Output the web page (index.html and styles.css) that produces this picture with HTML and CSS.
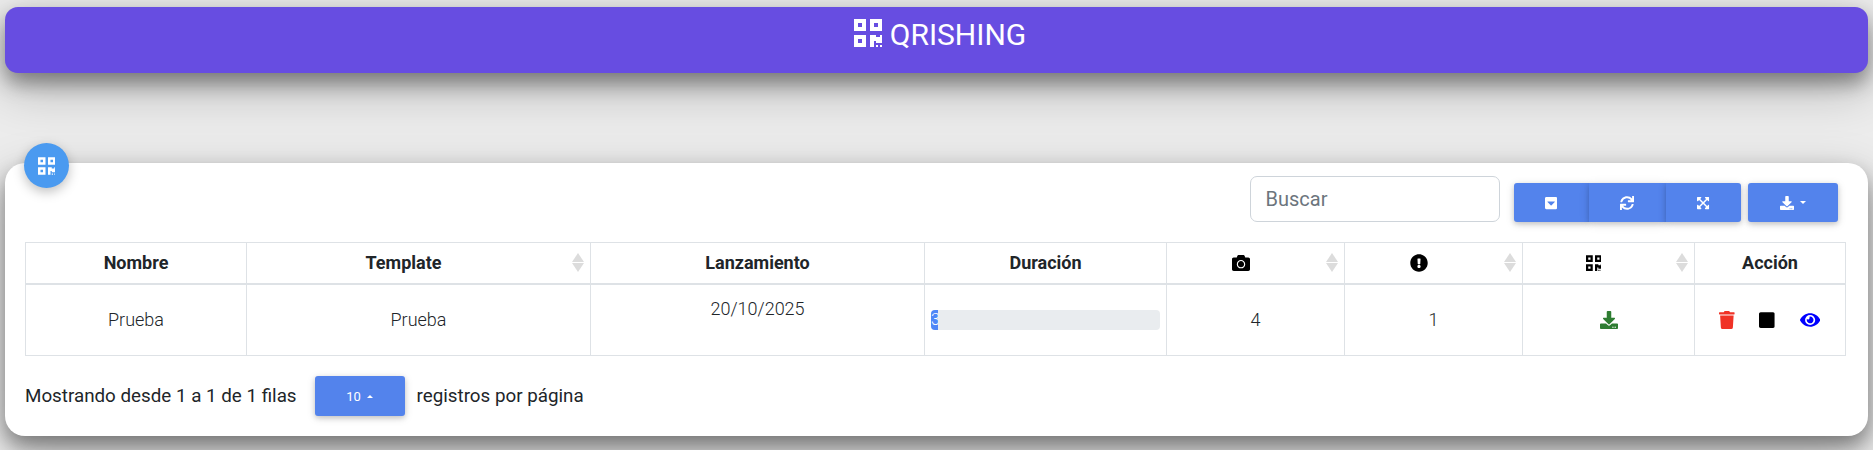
FILE: index.html
```html
<!DOCTYPE html>
<html lang="es">
<head>
<meta charset="utf-8">
<title>QRISHING</title>
<link rel="stylesheet" href="styles.css">
</head>
<body>
<svg class="defs" aria-hidden="true">
  <symbol id="i-qr" viewBox="0 0 448 512"><path d="M0 224h192V32H0v192zM64 96h64v64H64V96zm192-64v192h192V32H256zm128 128h-64V96h64v64zM0 480h192V288H0v192zm64-128h64v64H64v-64zm352-64h32v128h-96v-32h-32v96h-64V288h96v32h64v-32zm0 160h32v32h-32v-32zm-64 0h32v32h-32v-32z"/></symbol>
  <symbol id="i-down" viewBox="0 0 512 512"><path d="M216 0h80c13.3 0 24 10.7 24 24v168h87.7c17.8 0 26.7 21.5 14.1 34.1L269.7 378.3c-7.5 7.5-19.8 7.5-27.3 0L90.1 226.1c-12.6-12.6-3.7-34.1 14.1-34.1H192V24c0-13.3 10.7-24 24-24zm296 376v112c0 13.3-10.7 24-24 24H24c-13.3 0-24-10.7-24-24V376c0-13.3 10.7-24 24-24h146.7l49 49c20.1 20.1 52.5 20.1 72.6 0l49-49H488c13.3 0 24 10.7 24 24zm-124 88c0-11-9-20-20-20s-20 9-20 20 9 20 20 20 20-9 20-20zm64 0c0-11-9-20-20-20s-20 9-20 20 9 20 20 20 20-9 20-20z"/></symbol>
  <symbol id="i-trash" viewBox="0 0 448 512"><path d="M432 32H312l-9.4-18.7A24 24 0 0 0 281.1 0H166.8a23.72 23.72 0 0 0-21.4 13.3L136 32H16A16 16 0 0 0 0 48v32a16 16 0 0 0 16 16h416a16 16 0 0 0 16-16V48a16 16 0 0 0-16-16zM53.2 467a48 48 0 0 0 47.9 45h245.8a48 48 0 0 0 47.9-45L416 128H32z"/></symbol>
  <symbol id="i-stop" viewBox="0 0 448 512"><path d="M400 32H48C21.5 32 0 53.5 0 80v352c0 26.5 21.5 48 48 48h352c26.5 0 48-21.5 48-48V80c0-26.5-21.5-48-48-48z"/></symbol>
  <symbol id="i-eye" viewBox="0 0 576 512"><path d="M572.52 241.4C518.29 135.59 410.93 64 288 64S57.68 135.64 3.48 241.41a32.35 32.35 0 0 0 0 29.19C57.71 376.41 165.07 448 288 448s230.32-71.64 284.52-177.41a32.35 32.35 0 0 0 0-29.19zM288 400a144 144 0 1 1 144-144 143.93 143.93 0 0 1-144 144zm0-240a95.31 95.31 0 0 0-25.31 3.79 47.85 47.85 0 0 1-66.9 66.9A95.78 95.78 0 1 0 288 160z"/></symbol>
  <symbol id="i-camera" viewBox="0 0 512 512"><path d="M512 144v288c0 26.5-21.5 48-48 48H48c-26.5 0-48-21.5-48-48V144c0-26.5 21.5-48 48-48h88l12.3-32.9c7-18.7 24.9-31.1 44.9-31.1h125.5c20 0 37.9 12.4 44.9 31.1L376 96h88c26.5 0 48 21.5 48 48zM376 288c0-66.2-53.8-120-120-120s-120 53.8-120 120 53.8 120 120 120 120-53.8 120-120zm-32 0c0 48.5-39.5 88-88 88s-88-39.5-88-88 39.5-88 88-88 88 39.5 88 88z"/></symbol>
  <symbol id="i-excl" viewBox="0 0 512 512"><path d="M504 256c0 136.997-111.043 248-248 248S8 392.997 8 256C8 119.083 119.043 8 256 8s248 111.083 248 248zm-248 50c-25.405 0-46 20.595-46 46s20.595 46 46 46 46-20.595 46-46-20.595-46-46-46zm-43.673-165.346l7.418 136c.347 6.364 5.609 11.346 11.982 11.346h48.546c6.373 0 11.635-4.982 11.982-11.346l7.418-136c.375-6.874-5.098-12.654-11.982-12.654h-63.383c-6.884 0-12.356 5.78-11.981 12.654z"/></symbol>
  <symbol id="i-sync" viewBox="0 0 512 512"><path d="M440.65 12.57l4 82.77A247.16 247.16 0 0 0 255.83 8C134.73 8 33.91 94.92 12.29 209.82A12 12 0 0 0 24.09 224h49.05a12 12 0 0 0 11.67-9.26 175.91 175.91 0 0 1 317-56.94l-101.46-4.86a12 12 0 0 0-12.57 12v47.41a12 12 0 0 0 12 12H500a12 12 0 0 0 12-12V12a12 12 0 0 0-12-12h-47.37a12 12 0 0 0-11.98 12.57zM255.83 432a175.61 175.61 0 0 1-146-77.8l101.8 4.87a12 12 0 0 0 12.57-12v-47.4a12 12 0 0 0-12-12H12a12 12 0 0 0-12 12V500a12 12 0 0 0 12 12h47.35a12 12 0 0 0 12-12.6l-4.15-82.57A247.17 247.17 0 0 0 255.83 504c121.11 0 221.93-86.92 243.55-201.82a12 12 0 0 0-11.8-14.18h-49.05a12 12 0 0 0-11.67 9.26A175.86 175.86 0 0 1 255.83 432z"/></symbol>
  <symbol id="i-expand" viewBox="0 0 448 512"><path d="M448 344v112a23.94 23.94 0 0 1-24 24H312c-21.39 0-32.09-25.9-17-41l36.2-36.2L224 295.6 116.77 402.9 153 439c15.09 15.1 4.39 41-17 41H24a23.94 23.94 0 0 1-24-24V344c0-21.4 25.89-32.1 41-17l36.19 36.2L184.46 256 77.18 148.7 41 185c-15.1 15.1-41 4.4-41-17V56a23.94 23.94 0 0 1 24-24h112c21.39 0 32.09 25.9 17 41l-36.2 36.2L224 216.4l107.23-107.3L295 73c-15.09-15.1-4.39-41 17-41h112a23.94 23.94 0 0 1 24 24v112c0 21.4-25.89 32.1-41 17l-36.19-36.2L263.54 256l107.28 107.3L407 327.1c15.1-15.2 41-4.5 41 16.9z"/></symbol>
  <symbol id="i-caretsq" viewBox="0 0 448 512"><path d="M448 80v352c0 26.51-21.49 48-48 48H48c-26.51 0-48-21.49-48-48V80c0-26.51 21.49-48 48-48h352c26.51 0 48 21.49 48 48zM92.5 220.5l123 123c4.7 4.7 12.3 4.7 17 0l123-123c7.6-7.6 2.2-20.5-8.5-20.5H101c-10.7 0-16.1 12.9-8.5 20.5z"/></symbol>
</svg>

<header class="topbar">
  <svg class="ico ico-brand"><use href="#i-qr"/></svg>
  <span class="brand">QRISHING</span>
</header>

<main class="card">
  <div class="fab"><svg class="ico ico-fab"><use href="#i-qr"/></svg></div>

  <div class="toolbar">
    <input class="search" type="text" placeholder="Buscar">
    <div class="btn-group">
      <button class="btn"><svg class="ico ico-n14"><use href="#i-caretsq"/></svg></button>
      <button class="btn"><svg class="ico ico-w14"><use href="#i-sync"/></svg></button>
      <button class="btn"><svg class="ico ico-n14"><use href="#i-expand"/></svg></button>
    </div>
    <button class="btn btn-export"><svg class="ico ico-w14"><use href="#i-down"/></svg><span class="caret"></span></button>
  </div>

  <table class="data">
    <colgroup>
      <col class="c1"><col class="c2"><col class="c3"><col class="c4"><col class="c5"><col class="c6"><col class="c7"><col class="c8">
    </colgroup>
    <thead>
      <tr>
        <th>Nombre</th>
        <th class="sortable">Template</th>
        <th>Lanzamiento</th>
        <th>Duración</th>
        <th class="sortable"><svg class="ico ico-w18"><use href="#i-camera"/></svg></th>
        <th class="sortable"><svg class="ico ico-w18"><use href="#i-excl"/></svg></th>
        <th class="sortable"><svg class="ico ico-n18"><use href="#i-qr"/></svg></th>
        <th>Acción</th>
      </tr>
    </thead>
    <tbody>
      <tr>
        <td>Prueba</td>
        <td>Prueba</td>
        <td class="top">20/10/2025</td>
        <td class="bar-cell"><div class="progress"><div class="progress-fill">3</div></div></td>
        <td>4</td>
        <td>1</td>
        <td class="dl-cell"><svg class="ico ico-w18 green"><use href="#i-down"/></svg></td>
        <td>
          <div class="actions">
            <svg class="ico ico-n18 red"><use href="#i-trash"/></svg>
            <svg class="ico ico-n18 black"><use href="#i-stop"/></svg>
            <svg class="ico ico-eye blue"><use href="#i-eye"/></svg>
          </div>
        </td>
      </tr>
    </tbody>
  </table>

  <div class="pager">
    <span>Mostrando desde 1 a 1 de 1 filas</span>
    <button class="btn btn-size">10<span class="caret caret-up"></span></button>
    <span>registros por página</span>
  </div>
</main>
</body>
</html>
```
FILE: styles.css
```css
* { box-sizing: border-box; }

html, body {
  height: 450px;
  overflow: hidden;
}

body {
  margin: 0;
  background: #ececec;
  color: #212529;
  font-family: Roboto, "Liberation Sans", sans-serif;
}

.defs { display: none; }

.ico { display: inline-block; fill: currentColor; vertical-align: middle; }
.ico-brand { width: 28px; height: 32px; }
.ico-fab { width: 17.5px; height: 20px; }
.ico-n14 { width: 12.25px; height: 14px; }
.ico-w14 { width: 14px; height: 14px; }
.ico-n18 { width: 15.75px; height: 18px; }
.ico-w18 { width: 18px; height: 18px; }
.ico-eye { width: 20.25px; height: 18px; }
.green { color: #2e7d32; }
.red { color: #f03226; }
.blue { color: #0000ff; }
.black { color: #000; }

.topbar {
  height: 66px;
  margin: 7px 5px 0;
  padding: 10px 0 0 7px;
  display: flex;
  justify-content: center;
  align-items: flex-start;
  gap: 8px;
  border-radius: 13px;
  background: #674de1;
  color: #fff;
  box-shadow: 0 10px 20px rgba(0, 0, 0, .38), 0 16px 50px rgba(0, 0, 0, .24);
}

.brand { font-size: 30px; line-height: 34px; margin-top: 1px; }

.card {
  position: relative;
  height: 273px;
  margin: 90px 5px 0;
  padding: 13px 20px 0;
  border-radius: 20px;
  background: #fff;
  box-shadow: 0 10px 20px rgba(0, 0, 0, .38), 0 16px 50px rgba(0, 0, 0, .24);
}

.fab {
  position: absolute;
  left: 19px;
  top: -20px;
  width: 45px;
  height: 45px;
  display: flex;
  align-items: center;
  justify-content: center;
  border-radius: 50%;
  background: #4a9af0;
  color: #fff;
  box-shadow: 0 4px 12px rgba(0, 0, 0, .25);
}

.toolbar {
  display: flex;
  justify-content: flex-end;
  align-items: flex-end;
  height: 46px;
  padding-right: 10px;
}

.search {
  width: 250px;
  height: 46px;
  margin-right: 14px;
  padding: 0 15px 0;
  border: 1px solid #ced4da;
  border-radius: 7px;
  font: 400 20px Roboto, sans-serif;
  color: #495057;
  outline: none;
}
.search::placeholder { color: #6c757d; opacity: 1; }

.btn-group { display: flex; margin-right: 7px; }

.btn {
  height: 39px;
  padding: 0 31.5px;
  display: flex;
  align-items: center;
  border: 0;
  border-radius: 0;
  background: #5383ec;
  color: #fff;
  box-shadow: 0 2px 5px rgba(0, 0, 0, .16), 0 2px 10px rgba(0, 0, 0, .12);
}
.btn-group .btn:first-child { border-radius: 3px 0 0 3px; }
.btn-group .btn:last-child { border-radius: 0 3px 3px 0; }
.btn-export { border-radius: 3px; gap: 6px; padding: 0 32px; }

.caret {
  width: 0;
  height: 0;
  border-left: 3px solid transparent;
  border-right: 3px solid transparent;
  border-top: 3.5px solid #fff;
}
.caret-up { border-top: 0; border-bottom: 3.5px solid #fff; margin-left: 6px; }

.data {
  width: 1820px;
  margin-top: 20px;
  table-layout: fixed;
  border-collapse: collapse;
  font-size: 18px;
}
.c1 { width: 221px; }
.c2 { width: 344px; }
.c3 { width: 334px; }
.c4 { width: 242px; }
.c5 { width: 178px; }
.c6 { width: 178px; }
.c7 { width: 172px; }
.c8 { width: 151px; }

.data th, .data td {
  border: 1px solid #dee2e6;
  text-align: center;
}

.data th {
  height: 41px;
  padding: 0 12px;
  border-bottom-width: 2px;
  font-weight: 700;
  color: #212529;
  position: relative;
}
.data th.sortable { padding-right: 42px; }
.data th .ico { color: #000; margin-top: -4px; }
.data th.sortable::before,
.data th.sortable::after {
  content: "";
  position: absolute;
  right: 6px;
  width: 0;
  height: 0;
  border-left: 6px solid transparent;
  border-right: 6px solid transparent;
}
.data th.sortable::before { top: 10px; border-bottom: 9px solid #dcdcdc; }
.data th.sortable::after { top: 20px; border-top: 9px solid #dcdcdc; }

.data td {
  height: 72px;
  padding: 12px;
  vertical-align: middle;
  font-size: 18px;
  font-weight: 300;
  line-height: 24px;
  color: #212529;
}
.data td.top { vertical-align: top; }
.data td.bar-cell { padding: 0 6px; }
.data td.dl-cell { padding-bottom: 14px; }

.progress {
  height: 20px;
  border-radius: 4px;
  background: #e9ecef;
  overflow: hidden;
}
.progress-fill {
  width: 7px;
  height: 20px;
  overflow: hidden;
  background: #4f86f7;
  color: #fff;
  font-size: 16px;
  line-height: 20px;
  white-space: nowrap;
}

.actions {
  display: flex;
  justify-content: center;
  align-items: center;
  gap: 24.5px;
  padding-right: 1px;
}

.pager {
  display: flex;
  align-items: center;
  margin-top: 20px;
  font-size: 18.8px;
  color: #212529;
}
.btn-size {
  width: 90px;
  height: 40px;
  margin: 0 12px 0 18px;
  padding: 0;
  justify-content: center;
  border-radius: 3px;
  font: 400 13px Roboto, sans-serif;
}
```
